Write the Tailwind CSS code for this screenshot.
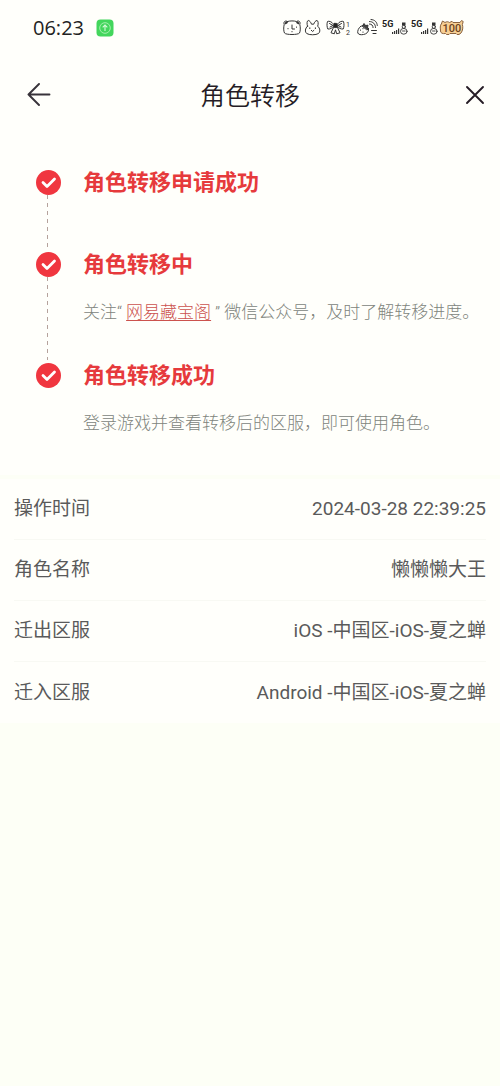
<!DOCTYPE html>
<html lang="zh-CN">
<head>
<meta charset="utf-8">
<meta name="viewport" content="width=device-width, initial-scale=1">
<title>角色转移</title>
<script src="https://cdn.jsdelivr.net/npm/@tailwindcss/browser@4"></script>
</head>
<body class="min-h-screen bg-[#fdfff6] font-['Roboto','Noto_Sans_CJK_SC',sans-serif] text-[#5a5a5a]">
<div class="bg-[#fffffb]">
  <!-- status bar -->
  <div class="flex h-14 items-center pr-[35px] pl-[33px] text-[#222222]">
    <span class="font-['Open_Sans','Noto_Sans',sans-serif] text-xl leading-6">06:23</span>
    <svg class="ml-3 size-[18px]" viewBox="0 0 18 18" fill="none">
      <rect x=".5" y=".5" width="17" height="17" rx="4" fill="#43d65c"/>
      <circle cx="9" cy="9" r="5.3" stroke="#a5efad" stroke-width="1"/>
      <path d="M9 12V6.2M6.7 8.3 9 6l2.3 2.3" stroke="#d5fad8" stroke-width="1.1"/>
    </svg>
    <svg class="ml-auto h-5 w-[182px]" viewBox="0 0 182 20" fill="none" stroke="#333" stroke-width="1" stroke-linecap="round" stroke-linejoin="round">
      <!-- bear clock -->
      <path d="M4.500 3.500C2 2 .2 4 1.200 6.500c-.7 3-.7 6.500.3 8.500 1.200 2 13.800 2 15 0 1-2 1-5.500.3-8.500 1-2.500-.8-4.500-3.300-3-2.500-.8-6.500-.8-9 0Z"/>
      <path d="m2.600 5.300 1.200-.9M14.200 4.400l1.200.9" stroke-width="2"/>
      <path d="M9 7v4h2.500M5 10.500v.3M13.500 9v.3M9 13.500v.3"/>
      <!-- rabbit -->
      <path d="M24.500 8.200c-.8-2.500-.6-5.500.7-5.700 1.400 0 2.600 1.700 3.300 3.700h2.200c.7-2 1.900-3.700 3.300-3.700 1.300.2 1.500 3.200.7 5.700 2.600 2.300 2.700 5.600.8 7.300-2.500 1.700-9.300 1.700-11.800 0-1.900-1.700-1.800-5 .8-7.300Z"/>
      <path d="M26.800 9.800v.8M32.400 9.800v.8M28.300 12.300l1.300 1.200 1.300-1.200"/>
      <!-- bow -->
      <path d="M50.500 6C48.500 3.500 46 2.800 44.500 3.500c-.8 2.200-.6 5.500.3 7.500 2.200.3 4.200-.8 5.700-2.500M54.500 6c2-2.500 4.500-3.200 6-2.500.8 2.200.6 5.500-.3 7.500-2.200.3-4.200-.8-5.700-2.500M50.500 9.500 48 14.800l3.300 1 1.200-4 1.200 4 3.300-1-2.500-5.300M46.500 5.500l3.500 2-3 1.500M58.500 5.500l-3.500 2 3 1.500"/>
      <rect x="50.700" y="5.400" width="3.600" height="4.200" rx="1" fill="#222"/>
      <g fill="#333" stroke="none" font-family="Roboto, sans-serif" font-size="7"><text x="63" y="9">1</text><text x="63" y="17">2</text></g>
      <!-- strawberry with wireless waves -->
      <path d="M77.500 8.500c3-2 7-.5 8 2.500.3 3-2 5-5 5.500-2.500.5-5 .2-5.700-1.500-.5-2 .7-5 2.700-6.500Z"/>
      <path d="M79.500 8 81 5.500l1.500 2 2.500-.3-.5 2.500 1.500 1.300-2 .6Z" fill="#444"/>
      <path d="M77.500 12v.3M80 14v.3M80 10.500v.3M86.500 3.500c3.500 0 6 2.500 6 6M86.500 6c2.200 0 3.600 1.500 3.600 3.600M88 1.500c4 .3 6 2.500 6.300 6"/>
      <path d="M88.500 12.500h5M90 15.500h3"/>
      <!-- mobile signals -->
      <g fill="#222" stroke="none" font-family="Roboto, sans-serif" font-size="9" font-weight="700"><text x="99" y="9">5G</text><text x="128" y="9">5G</text></g>
      <g fill="#333" stroke="none">
        <path d="M109 14h1.200v2H109zM111 13h1.200v3H111zM113 12h1.200v4H113zM115 10.500h1.200V16H115zM138 14h1.200v2H138zM140 13h1.200v3H140zM142 12h1.200v4H142zM144 10.500h1.200V16H144z"/>
        <path d="M119 7.500V4.500h3.500v3zM149 7.500V4.500h3.500v3z"/>
      </g>
      <g stroke-width=".9"><circle cx="120.800" cy="8.800" r="1.600"/><ellipse cx="120.800" cy="13.300" rx="3.300" ry="2.900"/><path d="M119.500 13h2.600"/><circle cx="150.800" cy="8.800" r="1.600"/><ellipse cx="150.800" cy="13.300" rx="3.300" ry="2.900"/><path d="M149.500 13h2.600"/></g>
      <!-- battery -->
      <path d="M158.500 5.500 159.500 3l2.500 1.500c1.500-1 3-1 4.500 0L169 3.300l1 1.200h7l1.500-2 1.700 1-.8 3c.8 3 .4 6-1.400 8.500l-2 1.500h-2l-1-1h-6l-1 1h-2.500l-1-1c-3 .5-5-.5-5-2.500 0-3-1-5 1-7.500Z" fill="#f7cf94" stroke="#8a6340"/>
      <text x="159.500" y="14" fill="#6b421c" stroke="none" font-family="Roboto, sans-serif" font-size="11" font-weight="500">100</text>
    </svg>
  </div>

  <header class="grid h-[78px] grid-cols-[1fr_auto_1fr] items-center px-[15px] text-[#251c25]">
    <button type="button" aria-label="返回" class="ml-3 justify-self-start">
      <svg class="block size-6" viewBox="0 0 24 24" fill="none" stroke="#38333a" stroke-width="1.900" stroke-linecap="round" stroke-linejoin="round"><path d="M22.500 11.500H1.500M12 1 1.500 11.500 12 22"/></svg>
    </button>
    <h1 class="pt-1 text-[25px] leading-8 font-[350]">角色转移</h1>
    <button type="button" aria-label="关闭" class="justify-self-end">
      <svg class="block size-5" viewBox="0 0 20 20" fill="none" stroke="#251c25" stroke-width="1.900" stroke-linecap="round"><path d="m2 2 16 16M18 2 2 18"/></svg>
    </button>
  </header>

  <ol class="flex flex-col pt-[33px] pr-4 pb-10 pl-9">
    <li class="flex gap-[22px]">
      <div class="flex w-[25px] shrink-0 flex-col items-center pt-[3px]">
        <svg class="block size-[25px] shrink-0" viewBox="0 0 25 25" fill="none"><circle cx="12.500" cy="12.500" r="12.500" fill="#f0363f"/><path d="m7 12.500 4 4 7.500-7.500" stroke="#fff" stroke-width="2.800" stroke-linecap="round" stroke-linejoin="round"/></svg>
        <svg class="mr-[3px] h-0 w-px grow" aria-hidden="true"><line x1=".5" y1="0" x2=".5" y2="100%" stroke="#b5a29c" stroke-width="1" stroke-dasharray="4 4"/></svg>
      </div>
      <h2 class="pb-[50px] text-[22px] leading-8 font-bold text-[#e63a3c]">角色转移申请成功</h2>
    </li>
    <li class="flex gap-[22px]">
      <div class="flex w-[25px] shrink-0 flex-col items-center pt-[3px]">
        <svg class="block size-[25px] shrink-0" viewBox="0 0 25 25" fill="none"><circle cx="12.500" cy="12.500" r="12.500" fill="#f0363f"/><path d="m7 12.500 4 4 7.500-7.500" stroke="#fff" stroke-width="2.800" stroke-linecap="round" stroke-linejoin="round"/></svg>
        <svg class="mr-[3px] h-0 w-px grow" aria-hidden="true"><line x1=".5" y1="0" x2=".5" y2="100%" stroke="#b5a29c" stroke-width="1" stroke-dasharray="4 4"/></svg>
      </div>
      <div class="pb-9">
        <h2 class="text-[22px] leading-8 font-bold text-[#e63a3c]">角色转移中</h2>
        <p class="mt-[19px] text-[17px] leading-6 font-light whitespace-nowrap text-[#80847c]">关注“<a href="#" class="mx-1 text-[#cc524e] underline underline-offset-2">网易藏宝阁</a>” 微信公众号，及时了解转移进度。</p>
      </div>
    </li>
    <li class="flex gap-[22px]">
      <div class="w-[25px] shrink-0 pt-[3px]">
        <svg class="block size-[25px]" viewBox="0 0 25 25" fill="none"><circle cx="12.500" cy="12.500" r="12.500" fill="#f0363f"/><path d="m7 12.500 4 4 7.500-7.500" stroke="#fff" stroke-width="2.800" stroke-linecap="round" stroke-linejoin="round"/></svg>
      </div>
      <div>
        <h2 class="text-[22px] leading-8 font-bold text-[#e63a3c]">角色转移成功</h2>
        <p class="mt-[19px] text-[17px] leading-6 font-light whitespace-nowrap text-[#80847c]">登录游戏并查看转移后的区服，即可使用角色。</p>
      </div>
    </li>
  </ol>
</div>

<dl class="mt-1 divide-y divide-[#f8f9f3] bg-[#fffffb] px-3.5 text-[19px] leading-7 font-normal">
  <div class="flex h-[61px] items-center justify-between"><dt>操作时间</dt><dd>2024-03-28 22:39:25</dd></div>
  <div class="flex h-[61px] items-center justify-between"><dt>角色名称</dt><dd>懒懒懒大王</dd></div>
  <div class="flex h-[61px] items-center justify-between"><dt>迁出区服</dt><dd>iOS -中国区-iOS-夏之蝉</dd></div>
  <div class="flex h-[61px] items-center justify-between"><dt>迁入区服</dt><dd>Android -中国区-iOS-夏之蝉</dd></div>
</dl>
</body>
</html>
